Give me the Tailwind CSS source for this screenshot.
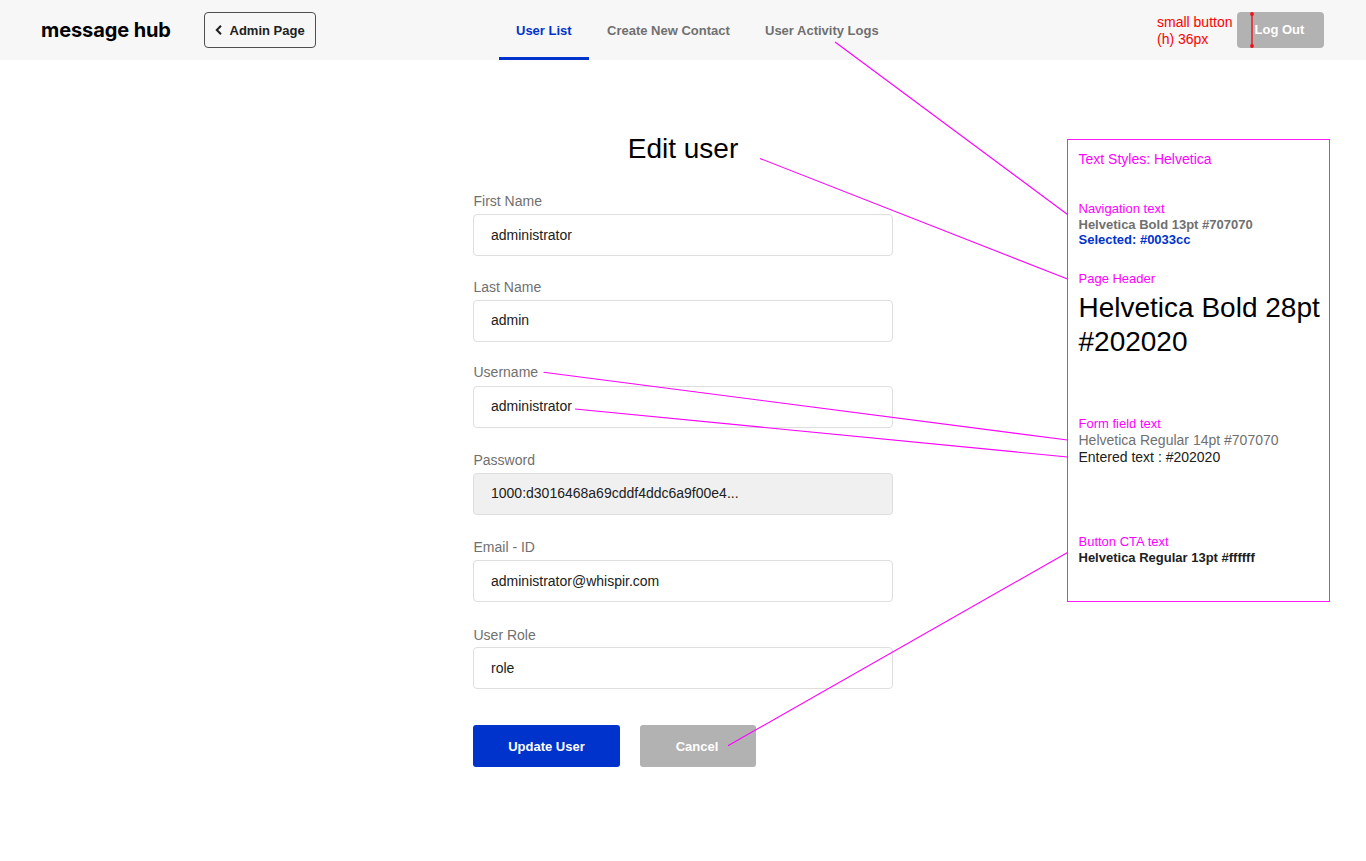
<!DOCTYPE html>
<html lang="en">
<head>
<meta charset="utf-8">
<title>message hub - Edit user</title>
<script src="https://cdn.jsdelivr.net/npm/@tailwindcss/browser@4"></script>
</head>
<body class="relative h-[861px] w-[1366px] overflow-hidden bg-white font-['Liberation_Sans',Arial,sans-serif] text-[14px] text-[#202020]">
<header class="flex h-[60px] bg-[#f7f7f7] text-[13px] font-bold">
  <div class="w-[163px] pt-[17px] pl-[41px] font-['Inter',sans-serif] text-[20px] leading-[26px] font-bold tracking-[-0.1px] whitespace-nowrap text-black">message hub</div>
  <button class="mt-[12px] ml-[41px] flex h-[36px] w-[112px] items-center rounded-[4px] border border-[#505050] pl-[10px]">
    <svg class="mr-[7.500px] h-[10px] w-[7px]" viewBox="0 0 7 10" fill="none" stroke="#202020" stroke-width="2"><path d="M6 .8 1.8 5 6 9.200"/></svg>
    <span class="pt-[2px] whitespace-nowrap">Admin Page</span>
  </button>
  <nav class="ml-[183px] flex leading-[62px] whitespace-nowrap text-[#707070]">
    <a class="h-[60px] w-[90px] border-b-3 border-[#0033cc] pl-[17px] text-[#0033cc]">User List</a>
    <a class="ml-[18px] w-[158px]">Create New Contact</a>
    <a class="w-[120px]">User Activity Logs</a>
  </nav>
  <div class="mt-[14px] ml-[272px] w-[80px] text-[14px] leading-[17px] font-normal whitespace-nowrap text-[#ff0000]">small button<br>(h) 36px</div>
  <button class="relative mt-[12px] h-[36px] w-[87px] rounded-[4px] bg-[#b2b2b2] pl-[17.500px] text-left whitespace-nowrap text-white">Log Out
    <svg class="absolute top-0 left-[12px] h-[36px] w-[6px]" viewBox="0 0 6 36" fill="#f01018"><path d="M2.300 1h1.400v34H2.300z"/><circle cx="3" cy="2" r="1.900"/><circle cx="3" cy="34" r="1.900"/></svg>
  </button>
</header>
<div class="flex">
  <main class="ml-[473px] w-[420px] pt-[69px]">
    <h1 class="text-center text-[28px] leading-[40px] text-black">Edit user</h1>
    <form class="mt-[22px] flex flex-col leading-[20px]">
      <label class="pl-[0.5px] text-[#707070]">First Name</label>
      <div class="mt-[3px] h-[42px] rounded-[4px] border border-[#dedede] pl-[17px] leading-[40px]">administrator</div>
      <label class="mt-[21px] pl-[0.5px] text-[#707070]">Last Name</label>
      <div class="mt-[3px] h-[42px] rounded-[4px] border border-[#dedede] pl-[17px] leading-[38px]">admin</div>
      <label class="mt-[20px] pl-[0.5px] text-[#707070]">Username</label>
      <div class="mt-[4px] h-[42px] rounded-[4px] border border-[#dedede] pl-[17px] leading-[38px]">administrator</div>
      <label class="mt-[22px] pl-[0.5px] text-[#707070]">Password</label>
      <div class="mt-[3px] h-[42px] rounded-[4px] border border-[#dedede] bg-[#f0f0f0] pl-[17px] leading-[38px]">1000:d3016468a69cddf4ddc6a9f00e4...</div>
      <label class="mt-[22px] pl-[0.5px] text-[#707070]">Email - ID</label>
      <div class="mt-[3px] h-[42px] rounded-[4px] border border-[#dedede] pl-[17px] leading-[40px]">administrator@whispir.com</div>
      <label class="mt-[23px] pl-[0.5px] text-[#707070]">User Role</label>
      <div class="mt-[2px] h-[42px] rounded-[4px] border border-[#dedede] pl-[17px] leading-[40px]">role</div>
      <div class="mt-[36px] flex gap-[20px] text-[13px] font-bold text-white">
        <button class="h-[42px] w-[147px] rounded-[3px] bg-[#0033cc] pt-[2px]">Update User</button>
        <button class="h-[42px] w-[116px] rounded-[3px] bg-[#b2b2b2] pt-[2px] pr-[2px]">Cancel</button>
      </div>
    </form>
  </main>
  <aside class="mt-[79px] ml-[174px] h-[463px] w-[263px] pt-[12px] pl-[11.500px] leading-[16px] whitespace-nowrap text-[#ff00ff]">
    <p>Text Styles: Helvetica</p>
    <p class="mt-[34px] text-[13px]">Navigation text</p>
    <p class="text-[13px] leading-[15px] font-bold text-[#707070]">Helvetica Bold 13pt #707070</p>
    <p class="text-[13px] leading-[15px] font-bold text-[#0033cc]">Selected: #0033cc</p>
    <p class="mt-[24px] text-[13px]">Page Header</p>
    <p class="mt-[4px] text-[28px] leading-[34px] text-black">Helvetica Bold 28pt<br>#202020</p>
    <p class="mt-[57px] text-[13px]">Form field text</p>
    <p class="leading-[17px] text-[#707070]">Helvetica Regular 14pt #707070</p>
    <p class="leading-[17px] text-[#202020]">Entered text : #202020</p>
    <p class="mt-[68px] text-[13px]">Button CTA text</p>
    <p class="text-[13px] leading-[15px] font-bold text-[#202020]">Helvetica Regular 13pt #ffffff</p>
  </aside>
</div>
<svg class="pointer-events-none absolute top-0 left-0 h-[861px] w-[1366px]" viewBox="0 0 1366 861" fill="none" stroke="#ff00ff" stroke-width="1.100">
  <rect x="1067.500" y="139.500" width="262" height="462" stroke="#ff1cf8" stroke-width="1"/>
  <path d="M835 42 1067.500 214.500M760 158.500 1067.500 279M543.500 372.300 1067.500 440M575 409 1067.500 457M728 745.700 1067.500 552.500"/>
</svg>
</body>
</html>
